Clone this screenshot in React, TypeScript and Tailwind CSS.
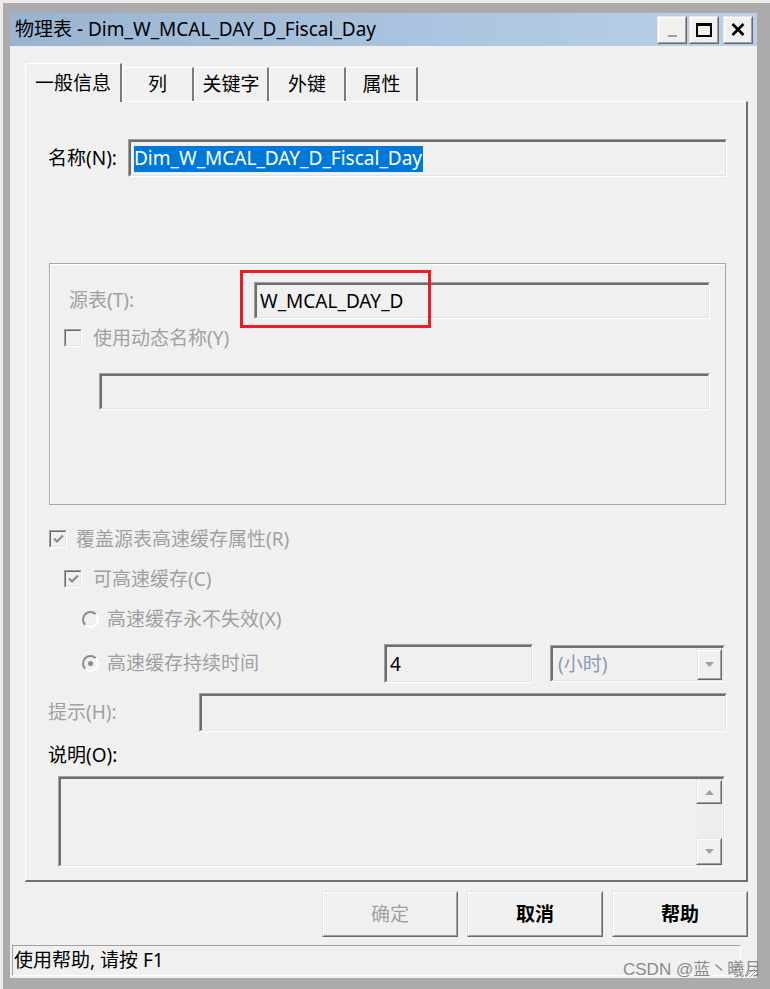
import React from "react";

type BoxProps = {
  className?: string;
  innerClassName?: string;
  children?: React.ReactNode;
};

// classic 3D sunken edge (text boxes, check boxes)
function Sunken({ className = "", innerClassName = "", children }: BoxProps) {
  return (
    <div
      className={`border border-t-[#a0a0a0] border-l-[#a0a0a0] border-b-white border-r-white ${className}`}
    >
      <div
        className={`h-full w-full border border-t-2 border-l-2 border-t-[#6e6e6e] border-l-[#6e6e6e] border-b-[#e3e3e3] border-r-[#e3e3e3] bg-[#f0f0f0] ${innerClassName}`}
      >
        {children}
      </div>
    </div>
  );
}

// classic 3D raised edge (buttons)
function Raised({ className = "", innerClassName = "", children }: BoxProps) {
  return (
    <div
      className={`border border-t-[#e3e3e3] border-l-[#e3e3e3] border-b-[#696969] border-r-[#696969] ${className}`}
    >
      <div
        className={`h-full w-full border border-t-white border-l-white border-b-[#a0a0a0] border-r-[#a0a0a0] bg-[#f0f0f0] ${innerClassName}`}
      >
        {children}
      </div>
    </div>
  );
}

function CheckBox({ checked }: { checked?: boolean }) {
  return (
    <div className="h-[18px] w-[18px] shrink-0 border border-t-[#a0a0a0] border-l-[#a0a0a0] border-b-white border-r-white">
      <div className="flex h-full w-full items-center justify-center border border-t-[#696969] border-l-[#696969] border-b-[#e3e3e3] border-r-[#e3e3e3] bg-[#f0f0f0]">
        {checked && (
          <svg width="11" height="10" viewBox="0 0 11 10">
            <path d="M1 4.5 L4 7.5 L10 1.5" stroke="#8c8c8c" strokeWidth="2.2" fill="none" />
          </svg>
        )}
      </div>
    </div>
  );
}

function Radio({ checked }: { checked?: boolean }) {
  return (
    <div className="flex h-[17px] w-[17px] shrink-0 items-center justify-center rounded-full border-2 border-t-[#8c8c8c] border-l-[#8c8c8c] border-b-white border-r-white bg-[#f0f0f0]">
      {checked && <div className="h-[5px] w-[5px] rounded-full bg-[#8c8c8c]" />}
    </div>
  );
}

function Arrow({ up }: { up?: boolean }) {
  return (
    <svg width="9" height="5" viewBox="0 0 9 5">
      <polygon points={up ? "0,5 4.5,0 9,5" : "0,0 4.5,5 9,0"} fill="#a0a0a0" />
    </svg>
  );
}

const tabs = [
  { label: "一般信息", w: "w-[97px]", active: true },
  { label: "列", w: "w-[72px]" },
  { label: "关键字", w: "w-[75px]" },
  { label: "外键", w: "w-[77px]" },
  { label: "属性", w: "w-[72px]" },
];

export default function App() {
  return (
    <div className="relative h-[989px] w-[770px] overflow-hidden border-t-[3px] border-l-[3px] border-t-[#ececec] border-l-[#ececec] bg-[#ababab] font-['Noto_Sans','Noto_Sans_CJK_SC',sans-serif] text-[19px] text-black">
      <div className="flex h-full flex-col pt-[10px] pr-[13px] pb-[11px] pl-[7px]">
        {/* Title bar */}
        <div className="flex h-[33px] shrink-0 items-center bg-linear-to-r from-[#99b4d1] to-[#b9d1ea] pr-[4px] pl-[5px]">
          <span className="leading-none">物理表 - Dim_W_MCAL_DAY_D_Fiscal_Day</span>
          <div className="ml-auto flex">
            <Raised className="h-[28px] w-[30px]" innerClassName="flex items-end justify-center pb-[5px]">
              <div className="h-[2px] w-[9px] bg-[#a0a0a0]" />
            </Raised>
            <Raised className="ml-[2px] h-[28px] w-[30px]" innerClassName="flex items-center justify-center">
              <div className="h-[14px] w-[16px] border-2 border-t-[3px] border-black" />
            </Raised>
            <Raised className="ml-[4px] h-[28px] w-[30px]" innerClassName="flex items-center justify-center">
              <svg width="14" height="13" viewBox="0 0 14 13">
                <path d="M1.5 1 L12.5 12 M12.5 1 L1.5 12" stroke="#000" strokeWidth="2.6" />
              </svg>
            </Raised>
          </div>
        </div>

        {/* Client area */}
        <div className="flex flex-1 flex-col bg-[#f0f0f0]">
          {/* Tabs */}
          <div className="mt-[17px] mr-[9px] ml-[15px] flex h-[38px] items-end">
            {tabs.map((t) => (
              <div
                key={t.label}
                className={`flex ${t.w} items-center justify-center rounded-tl-[3px] border-t border-l border-t-white border-l-white border-r-2 border-r-[#7a7a7a] bg-[#f0f0f0] ${
                  t.active ? "relative z-10 mb-[-1px] h-[39px]" : "h-[34px]"
                }`}
              >
                <span className="leading-none">{t.label}</span>
              </div>
            ))}
          </div>

          {/* Tab panel */}
          <div className="mr-[9px] ml-[15px] flex h-[781px] flex-col border-t border-l border-t-white border-l-white border-r-2 border-b-2 border-r-[#6f6f6f] border-b-[#6f6f6f] pl-[22px]">
            {/* Name */}
            <div className="mt-[37px] flex h-[38px] items-center">
              <span className="w-[80px] leading-none">名称(N):</span>
              <Sunken className="h-[38px] w-[599px]" innerClassName="flex items-center pl-[3px]">
                <span className="flex h-[26px] items-center bg-[#0078d7] pr-[1px] text-white">
                  Dim_W_MCAL_DAY_D_Fiscal_Day
                </span>
              </Sunken>
            </div>

            {/* Source group */}
            <div className="relative mt-[86px] ml-[1px] flex h-[242px] w-[677px] flex-col border border-[#a8a8a8] shadow-[inset_1px_1px_0_#ffffff]">
              <div className="mt-[18px] flex h-[37px] items-center">
                <span className="w-[204px] pl-[19px] leading-none text-[#a0a0a0]">源表(T):</span>
                <Sunken className="h-[37px] w-[456px]" innerClassName="flex items-center pl-[3px]">
                  <span className="leading-none">W_MCAL_DAY_D</span>
                </Sunken>
              </div>
              <div className="mt-[10px] flex h-[18px] items-center pl-[14px]">
                <CheckBox />
                <span className="ml-[11px] leading-none text-[#a0a0a0]">使用动态名称(Y)</span>
              </div>
              <Sunken className="mt-[26px] ml-[49px] h-[37px] w-[611px]" />
              <div className="absolute top-[6px] left-[190px] h-[58px] w-[191px] border-[3px] border-[#ec1c24]" />
            </div>

            {/* Cache options */}
            <div className="mt-[25px] flex h-[18px] items-center pl-[1px]">
              <CheckBox checked />
              <span className="ml-[9px] leading-none text-[#a0a0a0]">覆盖源表高速缓存属性(R)</span>
            </div>
            <div className="mt-[22px] flex h-[18px] items-center pl-[16px]">
              <CheckBox checked />
              <span className="ml-[11px] leading-none text-[#a0a0a0]">可高速缓存(C)</span>
            </div>
            <div className="mt-[23px] flex h-[17px] items-center pl-[34px]">
              <Radio />
              <span className="ml-[8px] leading-none text-[#a0a0a0]">高速缓存永不失效(X)</span>
            </div>
            <div className="mt-[16px] flex h-[39px] items-center">
              <div className="flex w-[336px] items-center pl-[34px]">
                <Radio checked />
                <span className="ml-[8px] leading-none text-[#a0a0a0]">高速缓存持续时间</span>
              </div>
              <Sunken className="h-[39px] w-[149px]" innerClassName="flex items-center pl-[3px]">
                <span className="leading-none">4</span>
              </Sunken>
              <Sunken className="ml-[17px] h-[37px] w-[175px]" innerClassName="flex items-center pr-[1px] pl-[5px]">
                <span className="leading-none text-[#8a9bb3]">(小时)</span>
                <Raised className="ml-auto h-[31px] w-[25px]" innerClassName="flex items-center justify-center">
                  <Arrow />
                </Raised>
              </Sunken>
            </div>

            {/* Hint */}
            <div className="mt-[10px] flex h-[39px] items-center">
              <span className="w-[151px] leading-none text-[#a0a0a0]">提示(H):</span>
              <Sunken className="h-[39px] w-[528px]" />
            </div>

            {/* Description */}
            <div className="mt-[12px] flex h-[22px] items-center">
              <span className="leading-none">说明(O):</span>
            </div>
            <Sunken className="mt-[10px] ml-[10px] h-[91px] w-[667px]" innerClassName="flex justify-end pt-[1px] pr-[1px]">
              <div className="flex w-[26px] flex-col">
                <Raised className="h-[24px]" innerClassName="flex items-center justify-center">
                  <Arrow up />
                </Raised>
                <div className="h-[34px] bg-[#f8f8f8] bg-[radial-gradient(#e2e2e2_0.6px,transparent_0.8px)] bg-[length:2px_2px]" />
                <Raised className="h-[27px]" innerClassName="flex items-center justify-center">
                  <Arrow />
                </Raised>
              </div>
            </Sunken>
          </div>

          {/* Dialog buttons */}
          <div className="mt-[9px] mr-[9px] flex h-[46px] justify-end gap-[9px]">
            <Raised className="h-[46px] w-[136px]" innerClassName="flex items-center justify-center">
              <span className="leading-none text-[#a0a0a0]">确定</span>
            </Raised>
            <Raised className="h-[46px] w-[136px]" innerClassName="flex items-center justify-center">
              <span className="leading-none font-bold">取消</span>
            </Raised>
            <Raised className="h-[46px] w-[136px]" innerClassName="flex items-center justify-center">
              <span className="leading-none font-bold">帮助</span>
            </Raised>
          </div>

          {/* Status bar */}
          <div className="mt-[8px] ml-[2px] flex h-[31px] w-[729px] items-center border border-t-[#a0a0a0] border-l-[#a0a0a0] border-b-white border-r-white pl-[1px]">
            <span className="leading-none">使用帮助, 请按 F1</span>
          </div>
        </div>
      </div>

      {/* size grip */}
      <svg className="absolute top-[961px] left-[741px]" width="14" height="14" viewBox="0 0 14 14">
        <path d="M13 2 L2 13 M13 6 L6 13 M13 10 L10 13" stroke="#a0a0a0" strokeWidth="1" />
        <path d="M13 3 L3 13 M13 7 L7 13 M13 11 L11 13" stroke="#ffffff" strokeWidth="1" />
      </svg>

      {/* watermark */}
      <div className="absolute top-[955px] left-[620px] font-['Liberation_Sans','Noto_Sans_CJK_SC',sans-serif] text-[17px] leading-[24px] text-[#8a8a8a]">
        CSDN @蓝丶曦月
      </div>
    </div>
  );
}
